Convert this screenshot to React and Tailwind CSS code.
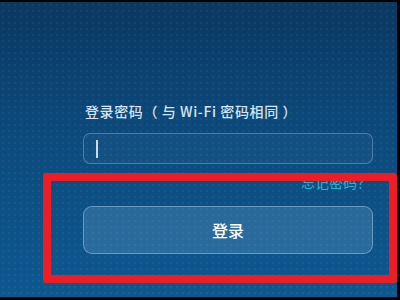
import React from "react";

export default function App() {
  return (
    <div className="w-[400px] h-[300px] bg-black pt-[2px] pb-[3px] pr-[3px] overflow-hidden" style={{ fontFamily: '"Noto Sans CJK SC", "Noto Sans", sans-serif' }}>
      <div className="relative w-full h-full bg-[linear-gradient(180deg,#0a3861_0%,#0c4a7c_45%,#0d5890_100%)]">
        <div className="absolute inset-0 bg-[radial-gradient(rgba(255,255,255,0.05)_1px,transparent_1.3px)] bg-[length:6px_6px]"></div>
        <div className="relative flex flex-col pl-[83px] pr-[24px] pt-[99px]">
          <div className="pl-[2px] text-[14px] leading-[20px] text-[#d6e4ef] font-medium tracking-[0.6px] [text-spacing-trim:space-all]">登录密码（ 与 Wi-Fi 密码相同 ）</div>
          <div className="mt-[12px] h-[31px] rounded-[7px] border border-[rgba(190,215,235,0.35)] bg-[rgba(255,255,255,0.03)] flex items-center pl-[12px]">
            <div className="w-[2px] h-[18px] bg-[#c9dbe8]"></div>
          </div>
          <div className="mt-[9px] flex justify-end pr-[2px] text-[14px] leading-[18px] text-[#29b3d2] [text-spacing-trim:space-all]">忘记密码？</div>
          <div className="relative mt-[15px] h-[48px] rounded-[9px] border border-[rgba(190,215,235,0.45)] bg-[rgba(120,170,210,0.28)] flex items-center justify-center text-[16px] font-medium text-white">
            登录
          </div>
        </div>
        <div className="absolute left-[43px] top-[171px] w-[354px] h-[110px] border-[8px] border-[#ee1c25] rounded-[3px]"></div>
      </div>
    </div>
  );
}
